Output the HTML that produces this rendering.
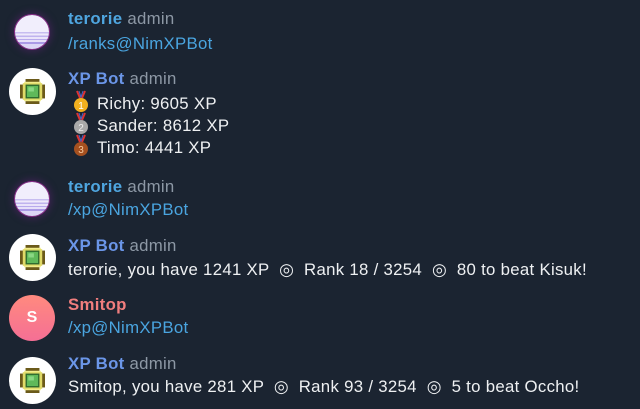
<!DOCTYPE html>
<html><head><meta charset="utf-8"><style>
body{margin:0;width:640px;height:409px;background:#1b2431;font-family:"Liberation Sans","DejaVu Sans",sans-serif;overflow:hidden;position:relative;color:#eef0f2}
.t{position:absolute;left:68px;font-size:16.8px;white-space:pre;letter-spacing:0.3px;line-height:20px}
.n{font-weight:bold}
.a{color:#8d98a5;font-weight:normal}
.b{color:#4fa6e0}
.x{color:#6b96e8}
.s{color:#f17e7e}
.l{color:#4aa5e0}
.av{position:absolute;border-radius:50%}
.ter{left:15px;width:34px;height:34px;box-shadow:0 0 0 1px #8a2c8a,0 0 7px 3px #3a2450;background:linear-gradient(#f1eefc 0 50%,#c7bdf0 50% 54%,#efeafb 54% 60%,#bfb3ee 60% 64%,#eae4fa 64% 70%,#b8aaec 70% 74%,#e6e0f9 74% 80%,#ab9ae6 80% 85%,#ddd6f6 85%)}
.bot{left:9px;width:47px;height:47px;background:#fff}
.gem{position:absolute;left:11px;top:11px;width:25px;height:25px}
.sm{left:9px;width:46px;height:46px;background:linear-gradient(#ff8a7e,#f56f95);color:#fff;font-weight:bold;font-size:16px;text-align:center;line-height:46px}
.med{position:absolute;left:72px}
</style></head><body>

<div class="av ter" style="top:15px"></div>
<div class="t" style="top:9px"><span class="n b">terorie</span> <span class="a">admin</span></div>
<div class="t l" style="top:34px">/ranks@NimXPBot</div>

<div class="av bot" style="top:68px"><svg class="gem" viewBox="0 0 18 18"><rect x="4" y="0" width="10" height="18" fill="#6b5a1a"/><rect x="0" y="4" width="18" height="10" fill="#6b5a1a"/><rect x="3" y="2" width="12" height="14" fill="#f0ec8a"/><rect x="2" y="3" width="14" height="12" fill="#e0da68"/><rect x="4" y="4" width="10" height="10" fill="#2d6a2d"/><rect x="5" y="5" width="8" height="8" fill="#5fb95a"/><rect x="6" y="6" width="4" height="3" fill="#8ad884"/></svg></div>
<div class="t" style="top:69px"><span class="n x">XP Bot</span> <span class="a">admin</span></div>
<svg class="med" style="top:90px" width="18" height="68" viewBox="0 0 18 68">
<g><path d="M5 1 L8 8 M13 1 L10 8" stroke="#d33" stroke-width="2"/><path d="M7 1 L9 7 L11 1" stroke="#46c" stroke-width="1" fill="none"/><circle cx="9" cy="15" r="7" fill="#f2b01e"/><text x="9" y="19" font-size="10" text-anchor="middle" fill="#fff" font-family="Liberation Sans">1</text></g>
<g transform="translate(0,22)"><path d="M5 1 L8 8 M13 1 L10 8" stroke="#d33" stroke-width="2"/><path d="M7 1 L9 7 L11 1" stroke="#46c" stroke-width="1" fill="none"/><circle cx="9" cy="15" r="7" fill="#a9a9a9"/><text x="9" y="19" font-size="10" text-anchor="middle" fill="#eee" font-family="Liberation Sans">2</text></g>
<g transform="translate(0,44)"><path d="M5 1 L8 8 M13 1 L10 8" stroke="#d33" stroke-width="2"/><path d="M7 1 L9 7 L11 1" stroke="#46c" stroke-width="1" fill="none"/><circle cx="9" cy="15" r="7" fill="#a5501f"/><text x="9" y="19" font-size="10" text-anchor="middle" fill="#f5c9a0" font-family="Liberation Sans">3</text></g>
</svg>
<div class="t" style="top:94px;left:97px">Richy: 9605 XP</div>
<div class="t" style="top:116px;left:97px">Sander: 8612 XP</div>
<div class="t" style="top:138px;left:97px">Timo: 4441 XP</div>

<div class="av ter" style="top:182px"></div>
<div class="t" style="top:177px"><span class="n b">terorie</span> <span class="a">admin</span></div>
<div class="t l" style="top:200px">/xp@NimXPBot</div>

<div class="av bot" style="top:234px"><svg class="gem" viewBox="0 0 18 18"><rect x="4" y="0" width="10" height="18" fill="#6b5a1a"/><rect x="0" y="4" width="18" height="10" fill="#6b5a1a"/><rect x="3" y="2" width="12" height="14" fill="#f0ec8a"/><rect x="2" y="3" width="14" height="12" fill="#e0da68"/><rect x="4" y="4" width="10" height="10" fill="#2d6a2d"/><rect x="5" y="5" width="8" height="8" fill="#5fb95a"/><rect x="6" y="6" width="4" height="3" fill="#8ad884"/></svg></div>
<div class="t" style="top:236px"><span class="n x">XP Bot</span> <span class="a">admin</span></div>
<div class="t" style="top:260px">terorie, you have 1241 XP  ◎  Rank 18 / 3254  ◎  80 to beat Kisuk!</div>

<div class="av sm" style="top:295px">S</div>
<div class="t" style="top:295px"><span class="n s">Smitop</span></div>
<div class="t l" style="top:318px">/xp@NimXPBot</div>

<div class="av bot" style="top:357px"><svg class="gem" viewBox="0 0 18 18"><rect x="4" y="0" width="10" height="18" fill="#6b5a1a"/><rect x="0" y="4" width="18" height="10" fill="#6b5a1a"/><rect x="3" y="2" width="12" height="14" fill="#f0ec8a"/><rect x="2" y="3" width="14" height="12" fill="#e0da68"/><rect x="4" y="4" width="10" height="10" fill="#2d6a2d"/><rect x="5" y="5" width="8" height="8" fill="#5fb95a"/><rect x="6" y="6" width="4" height="3" fill="#8ad884"/></svg></div>
<div class="t" style="top:354px"><span class="n x">XP Bot</span> <span class="a">admin</span></div>
<div class="t" style="top:377px">Smitop, you have 281 XP  ◎  Rank 93 / 3254  ◎  5 to beat Occho!</div>
</body></html>
